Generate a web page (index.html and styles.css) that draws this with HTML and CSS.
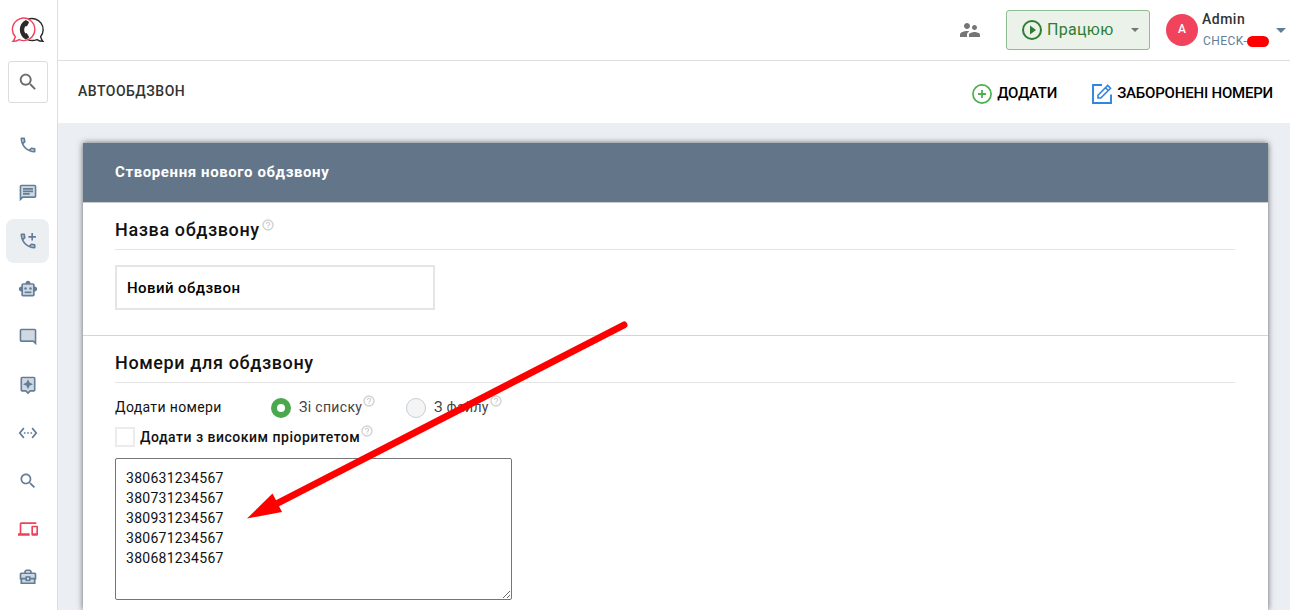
FILE: index.html
```html
<!DOCTYPE html>
<html lang="uk">
<head>
    <meta charset="UTF-8">
    <meta name="viewport" content="width=device-width, initial-scale=1.0">
    <title>Автообдзвон</title>
    <link rel="stylesheet" href="styles.css">
</head>
<body>
    <svg class="sprite" width="0" height="0">
        <symbol id="search" viewBox="0 0 24 24"><path d="M15.5 14h-.79l-.28-.27C15.41 12.59 16 11.11 16 9.5 16 5.91 13.09 3 9.5 3S3 5.91 3 9.5 5.91 16 9.5 16c1.61 0 3.09-.59 4.23-1.57l.27.28v.79l5 4.99L20.49 19l-4.99-5zm-6 0C7.01 14 5 11.99 5 9.5S7.01 5 9.5 5 14 7.01 14 9.5 11.99 14 9.5 14z"/></symbol>
        <symbol id="phone" viewBox="0 0 24 24"><path opacity=".3" d="M5 5h2l.5 3-2 1.500zM16 17l3 .5V19.500l-4-1z"/><path d="M6.54 5c.06.89.21 1.76.45 2.59l-1.2 1.2c-.41-1.2-.67-2.47-.76-3.79h1.51m9.86 12.02c.85.24 1.72.39 2.6.45v1.49c-1.32-.09-2.59-.35-3.8-.75l1.2-1.19M7.5 3H4c-.55 0-1 .45-1 1 0 9.39 7.61 17 17 17 .55 0 1-.45 1-1v-3.49c0-.55-.45-1-1-1-1.24 0-2.45-.2-3.57-.57-.1-.04-.21-.05-.31-.05-.26 0-.51.1-.71.29l-2.2 2.2c-2.83-1.45-5.15-3.76-6.59-6.59l2.2-2.2c.28-.28.36-.67.25-1.02C8.7 6.45 8.5 5.25 8.500 4c0-.55-.45-1-1-1z"/></symbol>
        <symbol id="help" viewBox="0 0 12 12"><circle cx="6" cy="6" r="5" fill="none" stroke="currentColor" stroke-width="1.4"/><path d="M4.300 4.900a1.700 1.600 0 1 1 2.500 1.400q-.8.4-.8 1.100M6 8.200v1" fill="none" stroke="currentColor" stroke-width="1.200"/></symbol>
    </svg>

    <div class="app">
        <div class="sidebar">
            <div class="logo">
                <svg width="34" height="28" viewBox="0 0 34 28" fill="none">
                    <path d="M17 3.200a11.200 11.200 0 0 1 12.600 17.600q.7 2.700 2.400 4.600-3.500 0-6-1.800-4.500 1.800-9 .2" stroke="#2b2a29" stroke-width="1.400"/>
                    <path d="M4.300 20.800a11.200 11.200 0 1 1 3.900 2.800q-2.700 1.800-6.300 1.800 1.700-1.900 2.400-4.600z" stroke="#ef425a" stroke-width="1.400"/>
                    <path d="M14.800 4c-8 3.500-8 15.500 0 19.500l2.700-1.600c.7-.5.6-1 .2-1.600l-1.500-2.500c-.4-.6-1-.5-1.500-.2-2-1.800-2-5.800 0-7.600.6.4 1.200.3 1.500-.3l1.500-2.600c.3-.6.3-1.200-.3-1.600z" fill="#2b2a29"/>
                </svg>
            </div>
            <div class="search-box"><svg width="22" height="22"><use href="#search"/></svg></div>
            <div class="menu">
                <div class="menu-item"><svg viewBox="0 0 24 24"><use href="#phone"/></svg></div>
                <div class="menu-item"><svg viewBox="0 0 24 24"><path opacity=".3" d="M4 4h16v12H5.170L4 17.170z"/><path d="M20 2H4c-1.100 0-1.990.9-1.990 2L2 22l4-4h14c1.100 0 2-.9 2-2V4c0-1.100-.9-2-2-2zm0 14H5.170L4 17.170V4h16v12zM6 12h8v2H6zM6 9h12v2H6zM6 6h12v2H6z"/></svg></div>
                <div class="menu-item active"><svg viewBox="0 0 24 24"><use href="#phone"/><path d="M16 2.500h2v3.500h3.500v2H18v3.500h-2V8h-3.500V6H16z"/></svg></div>
                <div class="menu-item"><svg viewBox="0 0 24 24"><path opacity=".3" d="M6 7h12v12H6z"/><path d="M20 9V7c0-1.100-.9-2-2-2h-3c0-1.660-1.340-3-3-3S9 3.340 9 5H6c-1.100 0-2 .9-2 2v2c-1.660 0-3 1.340-3 3s1.340 3 3 3v4c0 1.100.9 2 2 2h12c1.100 0 2-.9 2-2v-4c1.660 0 3-1.340 3-3s-1.340-3-3-3zm-2 10H6V7h12v12z"/><circle cx="9" cy="11.500" r="1.500"/><circle cx="15" cy="11.500" r="1.500"/><path d="M8 15h8v2H8z"/></svg></div>
                <div class="menu-item"><svg viewBox="0 0 24 24"><path opacity=".3" d="M4 4h16v13.170L18.830 16H4z"/><path d="M20 17.170L18.830 16H4V4h16v13.170zM20 2H4c-1.100 0-2 .9-2 2v12c0 1.100.9 2 2 2h14l4 4V4c0-1.100-.9-2-2-2z"/></svg></div>
                <div class="menu-item"><svg viewBox="0 0 24 24"><path opacity=".3" d="M5 4h14v14h-4.830L12 20.170 9.830 18H5z"/><path d="M19 2H5c-1.100 0-2 .9-2 2v14c0 1.100.9 2 2 2h4l3 3 3-3h4c1.100 0 2-.9 2-2V4c0-1.100-.9-2-2-2zm0 16h-4.830L12 20.170 9.830 18H5V4h14v14z"/><path d="M12 17l1.880-4.120L18 11l-4.120-1.880L12 5l-1.880 4.120L6 11l4.120 1.880z"/></svg></div>
                <div class="menu-item"><svg viewBox="0 0 24 24"><path d="M7.770 6.760L6.230 5.480.82 12l5.410 6.520 1.540-1.280L3.420 12l4.350-5.240zM7 13h2v-2H7v2zm10-2h-2v2h2v-2zm-6 2h2v-2h-2v2zm6.770-7.520l-1.540 1.280L20.580 12l-4.350 5.240 1.540 1.280L23.180 12l-5.410-6.520z"/></svg></div>
                <div class="menu-item"><svg viewBox="0 0 24 24"><use href="#search"/></svg></div>
                <div class="menu-item red"><svg viewBox="0 0 24 24"><path d="M4 6h18V4H4c-1.100 0-2 .9-2 2v11H0v3h14v-3H4V6zm19 2h-6c-.55 0-1 .45-1 1v10c0 .55.45 1 1 1h6c.55 0 1-.45 1-1V9c0-.55-.45-1-1-1zm-1 9h-4v-7h4v7z"/></svg></div>
                <div class="menu-item"><svg viewBox="0 0 24 24"><path opacity=".3" d="M3 8h18v12H3z"/><path fill="none" stroke="currentColor" stroke-width="2" d="M3 8.500q0-1 1-1h16q1 0 1 1V14H3zM4 14v5.500h16V14M8.500 7.500V5.200L10 4h4l1.500 1.200v2.300"/><path d="M9 11h6v6H9z"/><path fill="#fff" d="M11 13h2v2h-2z"/></svg></div>
            </div>
        </div>

        <div class="main">
            <div class="topbar">
                <svg class="people" width="24" height="24" viewBox="0 0 24 24"><path d="M16.500 12c1.380 0 2.490-1.120 2.490-2.500S17.880 7 16.500 7C15.120 7 14 8.120 14 9.500s1.120 2.500 2.500 2.500zM9 11c1.660 0 2.990-1.340 2.990-3S10.660 5 9 5C7.340 5 6 6.340 6 8s1.340 3 3 3zm7.500 3c-1.830 0-5.500.92-5.500 2.750V19h11v-2.250c0-1.830-3.670-2.750-5.500-2.750zM9 13c-2.330 0-7 1.170-7 3.500V19h7v-2.250c0-.85.33-2.340 2.370-3.470C10.500 13.100 9.660 13 9 13z"/></svg>
                <button class="status">
                    <svg width="20" height="20" viewBox="0 0 20 20"><circle cx="10" cy="10" r="9" fill="none" stroke="#2e7d32" stroke-width="2"/><path d="M8 5.500v9l6-4.500z" fill="#2e7d32"/></svg>
                    <span class="status-text">Працюю</span>
                    <span class="caret"></span>
                </button>
                <div class="avatar">A</div>
                <div class="user">
                    <div class="user-name">Admin</div>
                    <div class="user-org"><span>CHECK-</span><i class="hidden-id"></i></div>
                </div>
                <span class="caret big"></span>
            </div>

            <div class="page-head">
                <div class="page-title">АВТООБДЗВОН</div>
                <div class="actions">
                    <a class="action add">
                        <svg width="20" height="20" viewBox="0 0 20 20" fill="none" stroke="#4caf50"><circle cx="10" cy="10" r="9.100" stroke-width="1.700"/><path d="M10 6v8M6 10h8" stroke-width="1.800"/></svg>
                        <span>ДОДАТИ</span>
                    </a>
                    <a class="action banned">
                        <svg width="20" height="20" viewBox="0 0 20 20" fill="none" stroke="#2e86de" stroke-width="1.900"><path d="M10 1H1v18h18v-8.500"/><path d="M6 11.200L15.700 1.500l2.800 2.800L8.800 14H6zM13.500 3.700l2.800 2.800" stroke-width="1.600"/></svg>
                        <span>ЗАБОРОНЕНІ НОМЕРИ</span>
                    </a>
                </div>
            </div>

            <div class="content">
                <div class="card">
                    <div class="card-head"><span>Створення нового обдзвону</span></div>

                    <div class="section name-section">
                        <h2><span>Назва обдзвону</span><svg class="help"><use href="#help"/></svg></h2>
                        <input class="name-input" type="text" value="Новий обдзвон">
                    </div>

                    <div class="section">
                        <h2><span>Номери для обдзвону</span></h2>
                        <div class="source">
                            <span class="source-label">Додати номери</span>
                            <label class="option first"><i class="radio checked"></i><span>Зі списку</span><svg class="help"><use href="#help"/></svg></label>
                            <label class="option"><i class="radio"></i><span>З файлу</span><svg class="help"><use href="#help"/></svg></label>
                        </div>
                        <label class="priority"><i class="check"></i><span>Додати з високим пріоритетом</span><svg class="help"><use href="#help"/></svg></label>
                        <textarea class="numbers" spellcheck="false">380631234567
380731234567
380931234567
380671234567
380681234567</textarea>
                    </div>
                </div>
            </div>
        </div>
    </div>

    <svg class="arrow" width="390" height="206" viewBox="0 0 390 206">
        <path d="M384 10L38 188" stroke="#f00" stroke-width="7" stroke-linecap="round"/>
        <path d="M7 203.500L32.500 178.500 42 197z" fill="#f00"/>
    </svg>
</body>
</html>
```
FILE: styles.css
```css
* {
    box-sizing: border-box;
}

body {
    margin: 0;
    height: 610px;
    overflow: hidden;
    font-family: Roboto, "Liberation Sans", sans-serif;
    color: #111;
    background: #fff;
}

svg {
    display: block;
    flex: none;
}

.sprite {
    position: absolute;
}

.app {
    display: flex;
    height: 610px;
}

/* left menu */
.sidebar {
    width: 58px;
    flex: none;
    border-right: 1px solid #dedede;
    overflow: hidden;
}

.logo {
    height: 61px;
    padding: 16px 0 0 11px;
}

.search-box {
    width: 40px;
    height: 42px;
    margin-left: 8px;
    border: 1px solid #dcdcdc;
    border-radius: 3px;
    display: flex;
    align-items: center;
    justify-content: center;
    fill: #6b6b6b;
}

.menu {
    display: flex;
    flex-direction: column;
    gap: 4px;
    padding: 20px 0 0 6px;
}

.menu-item {
    width: 43px;
    height: 44px;
    flex: none;
    display: flex;
    align-items: center;
    justify-content: center;
    border-radius: 8px;
    color: #627d98;
    fill: currentColor;
}

.menu-item svg {
    width: 20px;
    height: 20px;
}

.menu-item.active {
    background: #ebeff2;
}

.menu-item.red {
    color: #ef425a;
}

/* top bar */
.main {
    flex: 1;
    min-width: 0;
    display: flex;
    flex-direction: column;
}

.topbar {
    height: 61px;
    flex: none;
    display: flex;
    align-items: center;
    justify-content: flex-end;
    border-bottom: 1px solid #dedede;
    padding-right: 4px;
}

.people {
    fill: #757575;
    margin-right: 24px;
}

.status {
    width: 144px;
    height: 40px;
    padding: 0 10px 0 15px;
    display: flex;
    align-items: center;
    font: 16px Roboto, sans-serif;
    color: #2e7d32;
    background: #eaf2ea;
    border: 1px solid #8fbc91;
    border-radius: 3px;
}

.status-text {
    margin: -1px 0 0 5px;
    letter-spacing: 0.3px;
}

.caret {
    border: 4px solid transparent;
    border-top-color: #757575;
    border-bottom: 0;
    margin-left: auto;
}

.avatar {
    width: 32px;
    height: 32px;
    margin-left: 16px;
    border-radius: 50%;
    background: #f1435b;
    color: #fff;
    font-size: 12px;
    font-weight: 500;
    line-height: 31px;
    text-align: center;
}

.user {
    width: 74px;
    height: 44px;
    padding-left: 4px;
}

.user-name {
    font-size: 14px;
    font-weight: 500;
    line-height: 22px;
    letter-spacing: 0.5px;
    color: #333;
}

.user-org {
    display: flex;
    align-items: center;
    height: 22px;
    padding-left: 1px;
    font-size: 12px;
    letter-spacing: 0.45px;
    color: #627d98;
}

.hidden-id {
    width: 22px;
    height: 11px;
    border-radius: 6px;
    background: #f00;
}

.caret.big {
    border-width: 5px;
    border-bottom: 0;
    border-top-color: #627d98;
    margin-left: 4px;
}

/* page title row */
.page-head {
    height: 62px;
    flex: none;
    display: flex;
    justify-content: space-between;
    padding: 0 17px 0 20px;
}

.page-title {
    font-size: 14px;
    font-weight: 500;
    line-height: 60px;
    letter-spacing: 0.5px;
    color: #333;
}

.actions {
    display: flex;
    gap: 35px;
    padding-top: 1px;
}

.action {
    display: flex;
    align-items: center;
    gap: 5px;
    height: 64px;
    font-size: 15px;
    font-weight: 500;
    letter-spacing: -0.2px;
    color: #000;
}

.action span {
    margin-top: -2px;
    white-space: nowrap;
}

/* card */
.content {
    flex: 1;
    min-height: 0;
    background: #ebeff4;
    padding: 20px 22px 0 25px;
}

.card {
    height: 100%;
    background: #fff;
    box-shadow: 0 0 6px rgba(0, 0, 0, 0.6);
}

.card-head {
    height: 60px;
    padding-left: 32px;
    border-bottom: 1px solid #ccc;
    background: #637589;
    color: #fff;
    font-size: 15px;
    font-weight: 700;
    line-height: 58px;
    letter-spacing: 0.6px;
}

.section {
    padding: 8px 33px 0 32px;
}

.name-section {
    height: 133px;
    border-bottom: 1px solid #d5d5d5;
}

h2 {
    display: flex;
    height: 39px;
    margin: 0;
    border-bottom: 1px solid #e5e5e5;
    font-size: 18px;
    font-weight: 500;
    line-height: 38px;
    letter-spacing: 0.62px;
}

.help {
    width: 12px;
    height: 12px;
    margin: 0 0 0 2px;
    color: #d2d2d2;
}

h2 .help {
    margin-top: 8px;
}

.name-input {
    display: block;
    width: 320px;
    height: 45px;
    margin-top: 15px;
    padding: 0 10px;
    border: 2px solid #e5e5e5;
    font: 500 15px Roboto, sans-serif;
    letter-spacing: 0.43px;
    color: #000;
    outline: none;
}

.source {
    display: flex;
    height: 41px;
    padding-top: 14px;
    font-size: 14px;
    line-height: 20px;
    letter-spacing: 0.35px;
}

.source-label {
    width: 156px;
}

.option {
    display: flex;
    color: #444;
}

.option.first {
    width: 135px;
}

.option .help {
    margin: -2px 0 0 1px;
}

.radio {
    width: 20px;
    height: 20px;
    margin: 1px 8px 0 0;
    border: 1px solid #c6ced6;
    border-radius: 50%;
    background: #f5f5f5;
}

.radio.checked {
    border: 6px solid #4ba84f;
    background: #fff;
}

.priority {
    display: flex;
    height: 34px;
    padding-top: 3px;
    font-size: 14px;
    font-weight: 500;
    line-height: 20px;
    letter-spacing: 0.5px;
}

.check {
    width: 20px;
    height: 20px;
    margin-right: 5px;
    border: 2px solid #ebebeb;
}

.priority .help {
    margin: -2px 0 0 1px;
}

.numbers {
    display: block;
    width: 397px;
    height: 142px;
    padding: 9px 10px;
    border: 1px solid #767676;
    border-radius: 2px;
    font: 14px/20px Roboto, sans-serif;
    letter-spacing: 0.27px;
    color: #111;
    resize: both;
    outline: none;
}

/* pointer drawn over the form */
.arrow {
    position: absolute;
    left: 240px;
    top: 315px;
    pointer-events: none;
}
```
